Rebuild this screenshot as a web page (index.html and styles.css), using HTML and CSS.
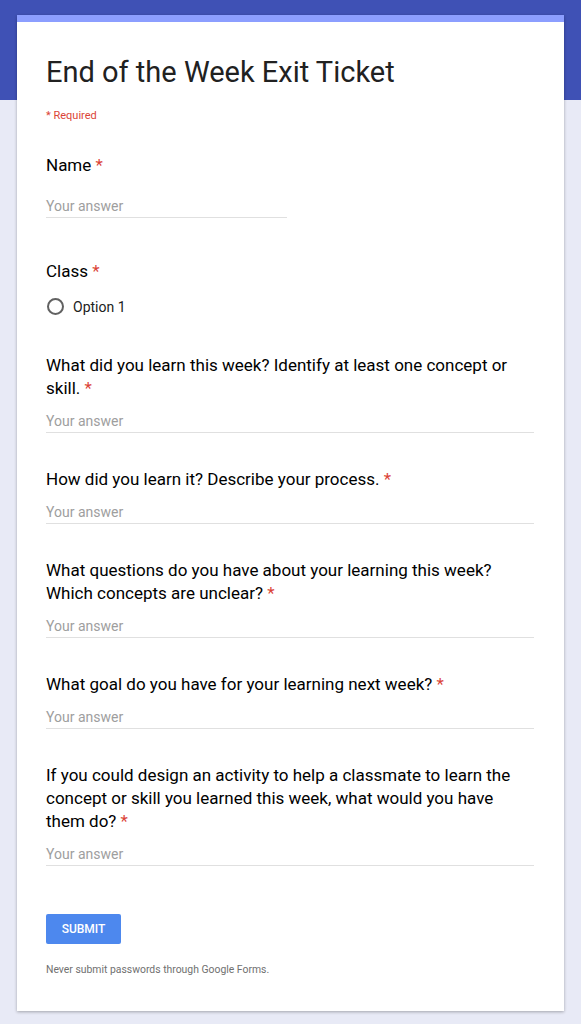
FILE: index.html
```html
<!DOCTYPE html>
<html lang="en">
<head>
    <meta charset="UTF-8">
    <meta name="viewport" content="width=device-width, initial-scale=1.0">
    <title>End of the Week Exit Ticket</title>
    <link rel="stylesheet" href="styles.css">
</head>
<body>
    <div class="header-band"></div>

    <div class="form-card">
        <div class="form-head">
            <h1 class="form-title">End of the Week Exit Ticket</h1>
            <div class="required-note">* Required</div>
        </div>

        <div class="question question-name">
            <div class="q-label">Name <span class="star">*</span></div>
            <div class="answer answer-short">Your answer</div>
        </div>

        <div class="question question-class">
            <div class="q-label">Class <span class="star">*</span></div>
            <div class="radio-row">
                <span class="radio"></span>
                <span class="radio-text">Option 1</span>
            </div>
        </div>

        <div class="question question-after-radio">
            <div class="q-label">What did you learn this week? Identify at least one concept or skill. <span class="star">*</span></div>
            <div class="answer">Your answer</div>
        </div>

        <div class="question">
            <div class="q-label">How did you learn it? Describe your process. <span class="star">*</span></div>
            <div class="answer">Your answer</div>
        </div>

        <div class="question">
            <div class="q-label">What questions do you have about your learning this week? Which concepts are unclear? <span class="star">*</span></div>
            <div class="answer">Your answer</div>
        </div>

        <div class="question">
            <div class="q-label">What goal do you have for your learning next week? <span class="star">*</span></div>
            <div class="answer">Your answer</div>
        </div>

        <div class="question">
            <div class="q-label">If you could design an activity to help a classmate to learn the concept or skill you learned this week, what would you have them do? <span class="star">*</span></div>
            <div class="answer">Your answer</div>
        </div>

        <div class="submit-area">
            <button class="submit-btn">SUBMIT</button>
            <div class="footer-note">Never submit passwords through Google Forms.</div>
        </div>
    </div>
</body>
</html>
```

FILE: styles.css
```css
body {
    margin: 0;
    background: #e8eaf6;
    font-family: Roboto, "Liberation Sans", Arial, sans-serif;
    color: #202124;
}

.header-band {
    height: 100px;
    background: #3f51b5;
}

.form-card {
    width: 547px;
    margin: -85px 0 14px 17px;
    background: #fff;
    border-top: 7px solid #8c9eff;
    box-shadow: 0 1px 3px rgba(0, 0, 0, 0.3);
    padding: 0 30px 0 29px;
    box-sizing: border-box;
    position: relative;
}

.form-head {
    padding-top: 32px;
}

.form-title {
    margin: 0;
    font-size: 29px;
    font-weight: 400;
    line-height: 36px;
    color: #212121;
}

.required-note {
    margin-top: 19px;
    font-size: 11px;
    line-height: 14px;
    color: #db4437;
}

.question {
    margin-top: 35px;
}

.question-name {
    margin-top: 31px;
}

.question-class {
    margin-top: 42px;
}

.question-after-radio {
    margin-top: 39px;
}

.q-label {
    font-size: 17px;
    line-height: 23px;
    color: #000;
}

.star {
    color: #db4437;
}

.answer {
    margin-top: 11px;
    font-size: 14px;
    line-height: 21px;
    color: #9e9e9e;
    border-bottom: 1px solid #e0e0e0;
}

.question-name .answer {
    margin-top: 19px;
}

.answer-short {
    width: 241px;
}

.radio-row {
    display: flex;
    align-items: center;
    margin-top: 15px;
}

.radio {
    width: 13px;
    height: 13px;
    border: 2px solid #616161;
    border-radius: 50%;
    margin-left: 1px;
}

.radio-text {
    margin-left: 9px;
    font-size: 14px;
    color: #212121;
}

.submit-area {
    padding-top: 48px;
    padding-bottom: 35px;
}

.submit-btn {
    display: block;
    width: 75px;
    height: 30px;
    background: #4d88ee;
    border: 0;
    border-radius: 2px;
    color: #fff;
    font-family: Roboto, "Liberation Sans", Arial, sans-serif;
    font-size: 12px;
    font-weight: 500;
}

.footer-note {
    margin-top: 19px;
    font-size: 10.4px;
    color: #707070;
}
```
